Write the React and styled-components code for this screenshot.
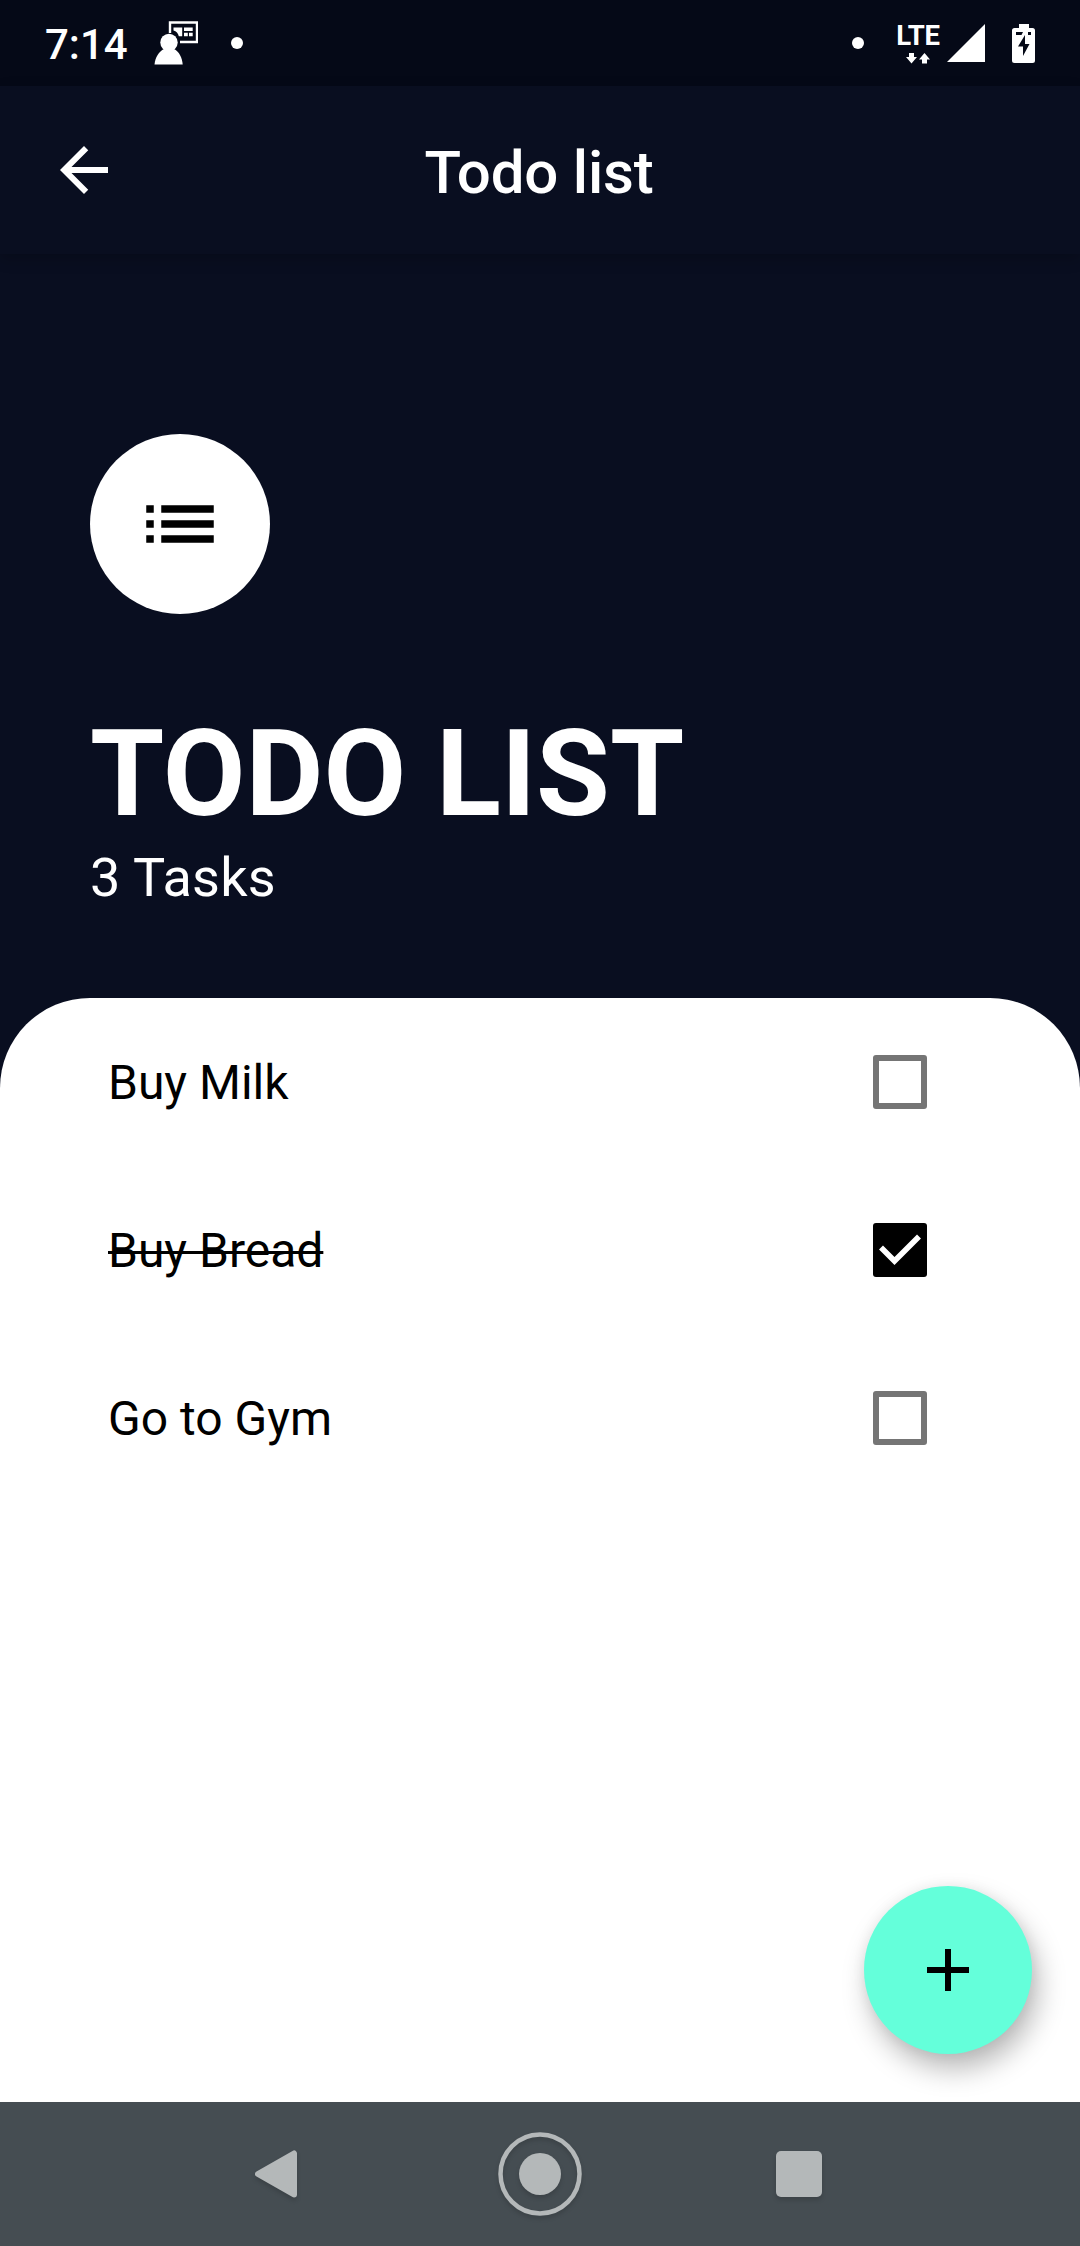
import React, { useState } from "react";
import styled, { createGlobalStyle } from "styled-components";

const GlobalStyle = createGlobalStyle`
  *, *::before, *::after { box-sizing: border-box; }
  body { margin: 0; background: #090e20; }
`;

const Screen = styled.div`
  width: 1080px;
  height: 2246px;
  display: flex;
  flex-direction: column;
  overflow: hidden;
  background: #090e20;
  color: #fff;
  font-family: Roboto, "Liberation Sans", sans-serif;
`;

const StatusBar = styled.div`
  flex: none;
  height: 86px;
  padding: 0 45px;
  display: flex;
  justify-content: space-between;
  align-items: center;
  background: #050917;
`;

const StatusGroup = styled.div`
  display: flex;
  align-items: center;
  height: 100%;
`;

const Clock = styled.span`
  font-size: 42px;
  line-height: 48px;
  font-weight: 500;
  width: 109px;
  padding-top: 3px;
`;

const Dot = styled.span`
  width: 12px;
  height: 12px;
  border-radius: 50%;
  background: #fff;
  margin: 0 ${(p) => p.$after || 0}px 0 ${(p) => p.$before || 0}px;
`;

const Network = styled.div`
  display: flex;
  flex-direction: column;
  align-items: center;
  width: 46px;
  margin-right: 6px;
`;

const NetworkLabel = styled.span`
  font-size: 27.5px;
  line-height: 26px;
  font-weight: 700;
  letter-spacing: -0.3px;
  height: 30px;
`;

const BatterySlot = styled.div`
  display: flex;
  margin-left: 27px;
`;

const AppBar = styled.header`
  flex: none;
  height: 168px;
  padding: 0 48px;
  display: grid;
  grid-template-columns: 72px 1fr 72px;
  align-items: center;
  background: #090e20;
  box-shadow: 0 5px 14px rgba(0, 0, 0, 0.2);
`;

const IconButton = styled.button`
  display: flex;
  padding: 0;
  border: 0;
  background: none;
  color: inherit;
`;

const AppTitle = styled.h1`
  margin: 0;
  padding: 6px 2px 0 0;
  text-align: center;
  font-size: 60px;
  line-height: 70px;
  font-weight: 500;
  letter-spacing: -0.2px;
`;

const Summary = styled.section`
  flex: none;
  height: 744px;
  padding: 180px 90px 0;
`;

const Avatar = styled.div`
  width: 180px;
  height: 180px;
  border-radius: 50%;
  display: flex;
  align-items: center;
  justify-content: center;
  background: #fff;
  color: #000;
`;

const Heading = styled.h2`
  margin: 90px 0 0;
  font-size: 120px;
  line-height: 141px;
  font-weight: 700;
`;

const Count = styled.p`
  margin: 1px 0 0;
  font-size: 54px;
  line-height: 63px;
  letter-spacing: 0.2px;
`;

const Sheet = styled.main`
  flex: 1;
  display: flex;
  flex-direction: column;
  justify-content: space-between;
  background: #fff;
  color: #000;
  border-radius: 90px 90px 0 0;
`;

const TaskList = styled.ul`
  list-style: none;
  margin: 0;
  padding: 0 153px 0 108px;
`;

const Task = styled.li`
  display: flex;
  align-items: center;
  justify-content: space-between;
  height: 168px;
`;

const TaskName = styled.span`
  padding-top: 2px;
  font-size: 48px;
  line-height: 56px;
  text-decoration: ${(p) => (p.$done ? "line-through 3px" : "none")};
`;

const Checkbox = styled.button`
  width: 54px;
  height: 54px;
  padding: 0;
  display: flex;
  border: ${(p) => (p.$checked ? "0" : "6px solid #757575")};
  border-radius: 3px;
  background: ${(p) => (p.$checked ? "#000" : "transparent")};
`;

const Fab = styled.button`
  align-self: flex-end;
  width: 168px;
  height: 168px;
  margin: 0 48px 48px 0;
  padding: 0;
  border: 0;
  border-radius: 50%;
  display: flex;
  align-items: center;
  justify-content: center;
  background: #64ffda;
  color: #000;
  box-shadow: 6px 15px 28px rgba(0, 0, 0, 0.28), 0 0 14px rgba(0, 0, 0, 0.06);
`;

const NavBar = styled.nav`
  flex: none;
  height: 144px;
  padding: 0 234px;
  display: flex;
  justify-content: space-between;
  align-items: center;
  background: #454d52;
  color: #b4b8b9;
`;

const NavButton = styled(IconButton)`
  width: 92px;
  height: 92px;
  align-items: center;
  justify-content: center;
  padding-right: ${(p) => p.$inset || 0}px;
  svg { flex: none; overflow: visible; filter: drop-shadow(0 3px 2px rgba(0, 0, 0, 0.15)); }
`;

const CastIcon = () => (
  <svg width="44" height="44" viewBox="0 0 44 44" fill="#fff">
    <path d="M16 12V1.500h27V21H26" fill="none" stroke="#fff" strokeWidth="2.400" />
    <path d="M19.500 6.500h8.700v8.700h-3.400c-.6-2.700-2.500-4.800-5.300-5.600zM30 6.500h8.700v3.600H30zM30 11.700h3.800v3.500H30zM35 11.700h3.700v3.500H35z" />
    <circle cx="15" cy="21.500" r="8.700" />
    <path d="M10 28h10c5 2.500 8 8 8.700 15.500H.5C1.200 36 5 30.500 10 28z" />
  </svg>
);

const DataArrows = () => (
  <svg width="24" height="11" viewBox="0 0 24 11" fill="#fff">
    <path d="M3 0h5v4h3L5.500 10.500 0 4h3zM16 10.500h5v-4h3L18.500 0 13 6.500h3z" />
  </svg>
);

const SignalIcon = () => (
  <svg width="38" height="38" viewBox="0 0 38 38" fill="#fff">
    <path d="M0 38L38 0V38z" />
  </svg>
);

const BatteryIcon = () => (
  <svg width="23" height="39" viewBox="0 0 23 39" fill="#fff">
    <path
      fillRule="evenodd"
      d="M7 0h10v4h3.500Q23 4 23 6.500V36.500Q23 39 20.500 39h-18Q0 39 0 36.500V6.500Q0 4 2.500 4H7zM4 8v3h5.500l1.500-3zM16 8v3h3V8zM13 11L6 22.500h5V32l6.500-12H13z"
    />
  </svg>
);

const BackIcon = () => (
  <svg width="72" height="72" viewBox="0 0 24 24" fill="currentColor">
    <path d="M20 11H7.830l5.590-5.590L12 4l-8 8 8 8 1.410-1.410L7.830 13H20v-2z" />
  </svg>
);

const ListIcon = () => (
  <svg width="90" height="90" viewBox="0 0 24 24" fill="currentColor">
    <path d="M3 13h2v-2H3v2zm0 4h2v-2H3v2zm0-8h2V7H3v2zm4 4h14v-2H7v2zm0 4h14v-2H7v2zM7 7v2h14V7H7z" />
  </svg>
);

const CheckIcon = () => (
  <svg width="54" height="54" viewBox="0 0 54 54" fill="none" stroke="#fff" strokeWidth="5.600">
    <path d="M8 24.500L21.500 38L46 13.500" />
  </svg>
);

const PlusIcon = () => (
  <svg width="72" height="72" viewBox="0 0 24 24" fill="currentColor">
    <path d="M19 13h-6v6h-2v-6H5v-2h6V5h2v6h6v2z" />
  </svg>
);

const initialTasks = [
  { name: "Buy Milk", done: false },
  { name: "Buy Bread", done: true },
  { name: "Go to Gym", done: false },
];

export default function App() {
  const [tasks, setTasks] = useState(initialTasks);
  const toggle = (index) =>
    setTasks(tasks.map((t, i) => (i === index ? { ...t, done: !t.done } : t)));

  return (
    <Screen>
      <GlobalStyle />
      <StatusBar>
        <StatusGroup>
          <Clock>7:14</Clock>
          <CastIcon />
          <Dot $before={33} />
        </StatusGroup>
        <StatusGroup>
          <Dot $after={31} />
          <Network>
            <NetworkLabel>LTE</NetworkLabel>
            <DataArrows />
          </Network>
          <SignalIcon />
          <BatterySlot>
            <BatteryIcon />
          </BatterySlot>
        </StatusGroup>
      </StatusBar>
      <AppBar>
        <IconButton aria-label="Back">
          <BackIcon />
        </IconButton>
        <AppTitle>Todo list</AppTitle>
      </AppBar>
      <Summary>
        <Avatar>
          <ListIcon />
        </Avatar>
        <Heading>TODO LIST</Heading>
        <Count>{tasks.length} Tasks</Count>
      </Summary>
      <Sheet>
        <TaskList>
          {tasks.map((task, i) => (
            <Task key={task.name}>
              <TaskName $done={task.done}>{task.name}</TaskName>
              <Checkbox
                role="checkbox"
                aria-checked={task.done}
                aria-label={task.name}
                $checked={task.done}
                onClick={() => toggle(i)}
              >
                {task.done && <CheckIcon />}
              </Checkbox>
            </Task>
          ))}
        </TaskList>
        <Fab aria-label="Add task">
          <PlusIcon />
        </Fab>
      </Sheet>
      <NavBar>
        <NavButton aria-label="Back" $inset={8}>
          <svg width="42" height="48" viewBox="0 0 42 48" fill="currentColor" stroke="currentColor" strokeWidth="6" strokeLinejoin="round">
            <path d="M39 3.500v41L3 24z" />
          </svg>
        </NavButton>
        <NavButton aria-label="Home">
          <svg width="84" height="84" viewBox="0 0 84 84">
            <circle cx="42" cy="42" r="39.500" fill="none" stroke="currentColor" strokeWidth="4.500" />
            <circle cx="42" cy="42" r="21" fill="currentColor" />
          </svg>
        </NavButton>
        <NavButton aria-label="Recent apps" $inset={2}>
          <svg width="46" height="46" viewBox="0 0 46 46">
            <rect width="46" height="46" rx="5" fill="currentColor" />
          </svg>
        </NavButton>
      </NavBar>
    </Screen>
  );
}
